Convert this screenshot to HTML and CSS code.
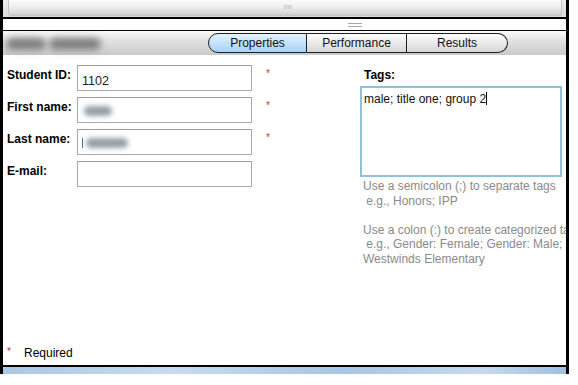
FILE: index.html
```html
<!DOCTYPE html>
<html>
<head>
<meta charset="utf-8">
<link rel="stylesheet" href="styles.css">
</head>
<body>
<div class="frame">
  <div class="hscroll">
    <div class="thumb"><span class="grip">IIII</span></div>
  </div>
  <div class="splitter"><span class="sgrip"></span></div>
  <div class="header">
    <div class="name-blur">
      <span class="nb nb1"></span><span class="nb nb2"></span>
    </div>
    <div class="tabs">
      <div class="tab tab-first active">Properties</div>
      <div class="tab">Performance</div>
      <div class="tab tab-last">Results</div>
    </div>
  </div>
  <div class="content">
    <div class="main">
      <div class="form">
        <div class="row">
          <label class="lbl">Student ID:</label>
          <div class="input">1102</div>
          <span class="star">*</span>
        </div>
        <div class="row">
          <label class="lbl">First name:</label>
          <div class="input"><span class="blur blur-first"></span></div>
          <span class="star">*</span>
        </div>
        <div class="row">
          <label class="lbl">Last name:</label>
          <div class="input"><span class="lcaret"></span><span class="blur blur-last"></span></div>
          <span class="star">*</span>
        </div>
        <div class="row">
          <label class="lbl">E-mail:</label>
          <div class="input"></div>
        </div>
      </div>
      <div class="tags">
        <div class="tags-lbl">Tags:</div>
        <div class="tags-box">male; title one; group 2<span class="caret"></span></div>
        <div class="help">
          <div>Use a semicolon (;) to separate tags</div>
          <div>&nbsp;e.g., Honors; IPP</div>
          <div>&nbsp;</div>
          <div>Use a colon (:) to create categorized tags</div>
          <div>&nbsp;e.g., Gender: Female; Gender: Male; School:</div>
          <div>Westwinds Elementary</div>
        </div>
      </div>
    </div>
    <div class="footer"><span class="star fstar">*</span><span>Required</span></div>
  </div>
  <div class="bottombar"></div>
</div>
</body>
</html>
```
FILE: styles.css
```css
* { box-sizing: border-box; }
html, body { margin: 0; padding: 0; background: #fff; }
body { font-family: "Liberation Sans", Arial, sans-serif; font-size: 12px; color: #000; }

.frame {
  width: 569px;
  height: 374px;
  border-left: 3px solid #000;
  border-right: 3px solid #000;
  display: flex;
  flex-direction: column;
  overflow: hidden;
}

.hscroll {
  height: 19px;
  flex: none;
  background: linear-gradient(#ececec, #dcdcdc);
  border-bottom: 2px solid #000;
  padding: 0 4px 0 5px;
}
.thumb {
  height: 16px;
  border: 1px solid #c4c4c4;
  border-top: none;
  border-radius: 0 0 3px 3px;
  background: linear-gradient(#fbfbfb, #ededed 50%, #dcdcdc 80%, #cfcfcf);
  display: flex;
  justify-content: center;
  align-items: center;
}
.grip {
  font-size: 6px;
  letter-spacing: 0.5px;
  color: #9a9a9a;
  margin-left: 6px;
  margin-top: -2px;
}

.splitter {
  height: 12px;
  flex: none;
  background: #fff;
  border-bottom: 1px solid #000;
  display: flex;
  justify-content: center;
  align-items: center;
  padding-left: 140px;
}
.sgrip {
  width: 14px;
  height: 4px;
  border-top: 1px solid #a8a8a8;
  border-bottom: 1px solid #a8a8a8;
}

.header {
  height: 24px;
  flex: none;
  background: linear-gradient(#fafafa, #e2e2e2 40%, #c9c9c9);
  display: flex;
  align-items: center;
}
.name-blur {
  width: 98px;
  margin-left: 3px;
  margin-top: 2px;
  display: flex;
  align-items: center;
  gap: 3px;
}
.nb {
  display: block;
  height: 12px;
  border-radius: 6px;
  background: #7e7e7e;
  filter: blur(3.5px);
}
.nb1 { width: 40px; }
.nb2 { width: 52px; }
.tabs {
  display: flex;
  margin-left: 104px;
}
.tab {
  height: 20px;
  line-height: 18px;
  width: 100px;
  text-align: center;
  border: 1px solid #1e1e1e;
  border-left: none;
  background: linear-gradient(#fdfdfd, #e6e6e6 60%, #d6d6d6);
  color: #111;
  font-size: 12px;
}
.tab-first {
  border-left: 1px solid #1e1e1e;
  border-radius: 10px 0 0 10px;
  width: 99px;
}
.tab-last {
  border-radius: 0 10px 10px 0;
  width: 101px;
}
.tab.active {
  background: linear-gradient(#e4f2fe, #c4e2fa 50%, #a8d2f3);
}

.content {
  flex: 1;
  display: flex;
  flex-direction: column;
  background: #fff;
  border-bottom: 2px solid #000;
}
.main {
  flex: 1;
  display: flex;
}
.form {
  width: 357px;
  flex: none;
  padding: 10px 0 0 4px;
  display: flex;
  flex-direction: column;
  gap: 6px;
}
.row {
  display: flex;
  align-items: flex-start;
  height: 26px;
}
.lbl {
  width: 70px;
  font-weight: bold;
  padding-top: 3px;
  font-size: 12px;
}
.input {
  width: 175px;
  height: 26px;
  border: 1px solid #a9a9a9;
  border-top-color: #9a9a9a;
  padding: 5px 0 0 4px;
  font-size: 12.5px;
  color: #222;
  display: flex;
  align-items: center;
  align-self: flex-start;
}
.star {
  color: #c23a3a;
  font-size: 10px;
  margin-left: 14px;
  padding-top: 3px;
}
.blur {
  display: inline-block;
  background: #96a0a6;
  border-radius: 6px;
  filter: blur(2.5px);
  height: 10px;
  margin-top: -4px;
}
.blur-first { width: 28px; margin-left: 2px; }
.blur-last { width: 42px; margin-left: 3px; }
.lcaret {
  display: inline-block;
  width: 1px;
  height: 10px;
  background: #666;
  margin-top: -4px;
}

.tags {
  flex: none;
  width: 240px;
  padding-top: 13px;
}
.tags-lbl {
  font-weight: bold;
  padding-left: 4px;
  height: 18px;
}
.tags-box {
  width: 202px;
  height: 91px;
  border: 2px solid #8fc1dd;
  padding: 4px 0 0 2px;
  font-size: 12px;
  color: #111;
}
.caret {
  display: inline-block;
  width: 1px;
  height: 13px;
  background: #000;
  vertical-align: -2px;
}
.help {
  color: #8a8a8a;
  font-size: 12px;
  line-height: 14.6px;
  white-space: nowrap;
  padding: 2px 0 0 3px;
}

.footer {
  padding: 0 0 3px 4px;
  height: 22px;
  display: flex;
  align-items: center;
}
.fstar {
  margin-left: 0;
  width: 17px;
  padding-top: 0;
  align-self: flex-start;
  margin-top: 3px;
}

.bottombar {
  height: 7px;
  flex: none;
  background: linear-gradient(90deg, #a9c7e6, #c7dcf1 30%, #a7c5e6 60%, #c5daf0 85%, #9fbfe2);
}
```
